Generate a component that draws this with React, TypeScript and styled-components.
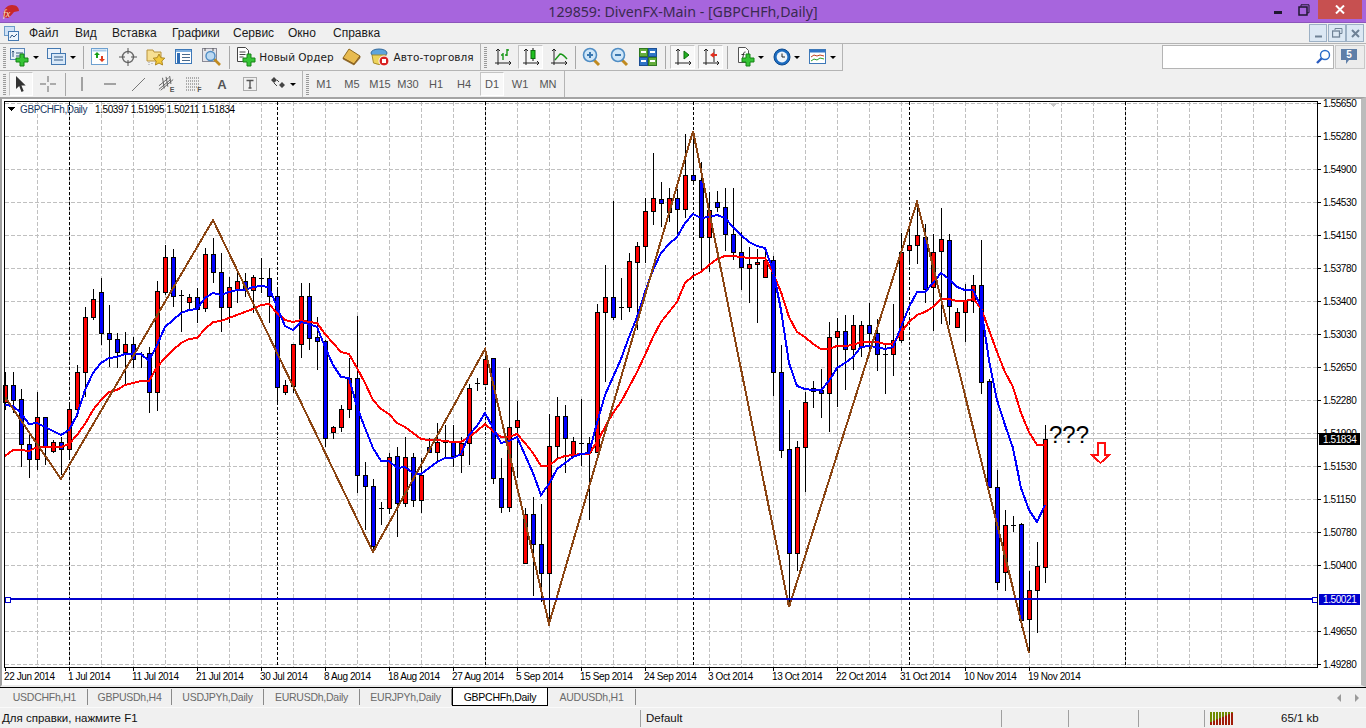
import React from "react";
import styled, { createGlobalStyle } from "styled-components";

const GlobalStyle = createGlobalStyle`
    html, body { margin: 0; padding: 0; background: #f0f0f0; overflow: hidden; }
    * { box-sizing: border-box; }
`;

const Page = styled.div`
    width: 1366px;
    height: 728px;
    display: flex;
    flex-direction: column;
    font-family: "Liberation Sans", Arial, sans-serif;
    background: #f0f0f0;
    color: #000;
    overflow: hidden;
`;

const TitleBar = styled.div`
    height: 23px;
    flex: none;
    position: relative;
    background: #a765dd;
    border-bottom: 1px solid #8c55bb;
`;
const AppLogo = styled.svg`
    position: absolute;
    left: 2px;
    top: 4px;
`;
const TitleText = styled.div`
    position: absolute;
    left: 548px;
    top: 2px;
    width: 270px;
    text-align: center;
    white-space: nowrap;
    font-family: "Noto Sans", sans-serif;
    font-size: 14.2px;
    line-height: 20px;
    color: #3a2a50;
`;
const WinMin = styled.div`
    position: absolute;
    left: 1274px;
    top: 11px;
    width: 8px;
    height: 3px;
    background: #1f1730;
`;
const WinMax = styled.svg`
    position: absolute;
    left: 1298px;
    top: 4px;
`;
const WinClose = styled.div`
    position: absolute;
    left: 1318px;
    top: 0;
    width: 44px;
    height: 19px;
    background: #c75050;
    display: flex;
    align-items: center;
    justify-content: center;
`;

const MenuBar = styled.div`
    height: 20px;
    flex: none;
    position: relative;
    display: flex;
    align-items: center;
    font-size: 12px;
    padding-left: 29px;
`;
const MdiIcon = styled.svg`
    position: absolute;
    left: 4px;
    top: 3px;
`;
const MenuItem = styled.span<{ $w: number }>`
    width: ${p => p.$w}px;
    flex: none;
    color: #1a1a1a;
`;
const MdiBtn = styled.div<{ $x: number }>`
    position: absolute;
    left: ${p => p.$x}px;
    top: 1px;
    width: 18px;
    height: 18px;
    background: #dce8f4;
    border: 1px solid #9cb0c4;
    display: flex;
    align-items: center;
    justify-content: center;
`;

const ToolRow = styled.div<{ $h: number; $line: boolean }>`
    height: ${p => p.$h}px;
    flex: none;
    display: flex;
    border-top: ${p => (p.$line ? "1px solid #b4b4b4" : "none")};
    position: relative;
`;
const ToolGroup = styled.div<{ $w: number; $edge?: boolean }>`
    width: ${p => p.$w}px;
    flex: none;
    display: flex;
    align-items: center;
    padding-left: 3px;
    border-right: 1px solid #b4b4b4;
    border-bottom: ${p => (p.$edge ? "1px solid #b4b4b4" : "none")};
`;
const Grip = styled.div`
    width: 3px;
    height: 21px;
    flex: none;
    background-image: linear-gradient(#9a9a9a 1px, transparent 1px);
    background-size: 3px 2px;
`;
const ToolSep = styled.div<{ $ml: number }>`
    width: 1px;
    height: 23px;
    flex: none;
    margin-left: ${p => p.$ml}px;
    background: #a8a8a8;
`;
const ToolBtn = styled.div<{ $w?: number; $ml?: number; $on?: boolean }>`
    width: ${p => p.$w ?? 24}px;
    height: 24px;
    flex: none;
    margin-left: ${p => p.$ml ?? 4}px;
    display: flex;
    align-items: center;
    justify-content: center;
    gap: 3px;
    background: ${p => (p.$on ? "#f8f8f8" : "transparent")};
    border: ${p => (p.$on ? "1px solid" : "none")};
    border-color: #c4c4c4 #fff #fff #c4c4c4;
`;
const BtnLabel = styled.span`
    font-family: "DejaVu Sans", sans-serif;
    font-size: 10.5px;
    white-space: nowrap;
    color: #1a1a1a;
`;
const PeriodBtn = styled(ToolBtn)`
    font-size: 11px;
    color: #555;
`;
const Caret = styled.div`
    width: 0;
    height: 0;
    flex: none;
    border-left: 3px solid transparent;
    border-right: 3px solid transparent;
    border-top: 3px solid #000;
`;
const SearchBox = styled.div`
    position: absolute;
    left: 1162px;
    top: 1px;
    width: 172px;
    height: 24px;
    background: #fff;
    border: 1px solid #b4b4b4;
`;
const SearchIcon = styled.svg`
    position: absolute;
    right: 2px;
    top: 3px;
`;
const ChatBtn = styled.div`
    position: absolute;
    left: 1335px;
    top: 1px;
    width: 30px;
    height: 24px;
    background: #ececec;
    border: 1px solid #c8c8c8;
    display: flex;
    align-items: center;
    justify-content: center;
`;

const ChartPane = styled.div`
    height: 590px;
    flex: none;
    background: #fff;
    border-top: 2px solid #a4a4a4;
    border-left: 2px solid #a0a0a0;
    border-right: 5px solid #bcbcbc;
    border-bottom: 2px solid #ebebeb;
`;
const ChartSvg = styled.svg`
    display: block;
`;
const AxisText = styled.text`
    font-family: "Liberation Sans", Arial, sans-serif;
    font-size: 10px;
    letter-spacing: -0.4px;
    fill: #000;
`;
const LegendText = styled(AxisText)`
    fill: #17385f;
`;
const LabelText = styled(AxisText)`
    fill: #fff;
`;
const NoteText = styled.text`
    font-family: "Liberation Sans", Arial, sans-serif;
    font-size: 24px;
    fill: #000;
`;

const TabBar = styled.div`
    height: 20px;
    flex: none;
    position: relative;
    display: flex;
    padding-left: 2px;
    border-top: 1px solid #000;
`;
const Tab = styled.div<{ $w: number; $active?: boolean }>`
    width: ${p => p.$w}px;
    height: ${p => (p.$active ? 18 : 16)}px;
    margin-top: ${p => (p.$active ? 0 : 1)}px;
    flex: none;
    display: flex;
    align-items: center;
    justify-content: center;
    font-size: 10.5px;
    letter-spacing: -0.25px;
    color: ${p => (p.$active ? "#000" : "#6a6a6a")};
    background: ${p => (p.$active ? "#fff" : "transparent")};
    border-right: 1px solid ${p => (p.$active ? "#000" : "#8a8a8a")};
    border-left: ${p => (p.$active ? "1px solid #000" : "none")};
    border-bottom: ${p => (p.$active ? "1px solid #000" : "none")};
`;
const TabArrow = styled.div<{ $x: number; $dir: "l" | "r" }>`
    position: absolute;
    left: ${p => p.$x}px;
    top: 6px;
    width: 0;
    height: 0;
    border-top: 4px solid transparent;
    border-bottom: 4px solid transparent;
    border-${p => (p.$dir === "l" ? "right" : "left")}: 4px solid #9a9a9a;
`;

const StatusBar = styled.div`
    height: 21px;
    flex: none;
    display: flex;
    align-items: center;
    border-top: 1px solid #fafafa;
    font-size: 11.5px;
`;
const StatusCell = styled.div<{ $w: number; $first?: boolean; $pad?: number }>`
    width: ${p => p.$w}px;
    height: 17px;
    flex: none;
    display: flex;
    align-items: center;
    padding-left: ${p => p.$pad ?? 5}px;
    border-left: ${p => (p.$first ? "none" : "1px solid #a0a0a0")};
    white-space: nowrap;
    color: #111;
`;

/* ---------- chart data, screen pixels ---------- */
type Candle = [number, number, number, number, number, "r" | "b"];
const candles: Candle[] = [
    [5, 385, 402, 372, 410, "r"], [13, 385, 400, 372, 413, "b"], [21, 399, 444, 389, 467, "b"], [29, 444, 459, 432, 478, "b"],
    [37, 417, 459, 392, 470, "r"], [45, 417, 447, 417, 465, "b"], [53, 442, 451, 440, 453, "r"], [61, 442, 449, 437, 475, "b"],
    [69, 409, 449, 402, 458, "r"], [77, 372, 409, 365, 417, "r"], [85, 317, 372, 307, 397, "r"], [93, 299, 317, 289, 320, "r"],
    [101, 292, 333, 278, 345, "b"], [109, 333, 339, 305, 367, "b"], [117, 339, 352, 333, 368, "b"], [125, 344, 352, 332, 385, "r"],
    [133, 344, 359, 337, 368, "b"], [141, 354, 354, 352, 368, "b"], [149, 353, 392, 347, 413, "b"], [157, 291, 392, 281, 411, "r"],
    [165, 257, 292, 245, 295, "r"], [173, 257, 296, 249, 307, "b"], [181, 295, 295, 290, 332, "b"], [189, 297, 302, 294, 309, "r"],
    [197, 297, 309, 288, 323, "b"], [205, 254, 308, 248, 312, "r"], [213, 254, 272, 238, 283, "b"], [221, 272, 307, 253, 332, "b"],
    [229, 287, 307, 277, 323, "r"], [237, 281, 290, 273, 303, "r"], [245, 281, 290, 273, 297, "b"], [253, 277, 290, 275, 313, "r"],
    [261, 278, 278, 258, 293, "b"], [269, 278, 296, 268, 323, "b"], [277, 296, 387, 287, 403, "b"], [285, 385, 392, 380, 395, "r"],
    [293, 344, 386, 344, 393, "r"], [301, 296, 344, 283, 358, "r"], [309, 296, 338, 283, 350, "b"], [317, 337, 341, 317, 370, "b"],
    [325, 341, 438, 340, 447, "b"], [333, 427, 432, 426, 439, "r"], [341, 409, 427, 405, 432, "r"], [349, 378, 409, 358, 418, "r"],
    [357, 378, 475, 316, 493, "b"], [365, 475, 486, 462, 530, "b"], [373, 486, 546, 479, 552, "b"], [381, 508, 508, 502, 525, "b"],
    [389, 457, 508, 453, 514, "r"], [397, 456, 503, 447, 537, "b"], [405, 457, 503, 437, 507, "r"], [413, 457, 500, 453, 507, "b"],
    [421, 475, 500, 458, 513, "r"], [429, 447, 452, 438, 453, "b"], [437, 442, 452, 423, 463, "r"], [445, 442, 442, 425, 458, "b"],
    [453, 442, 456, 425, 467, "b"], [461, 443, 455, 437, 473, "r"], [469, 388, 443, 384, 465, "r"], [477, 383, 383, 378, 391, "b"],
    [485, 359, 384, 350, 384, "r"], [493, 358, 478, 358, 484, "b"], [501, 478, 507, 458, 513, "b"], [509, 427, 507, 368, 512, "r"],
    [517, 420, 427, 401, 478, "r"], [525, 514, 563, 508, 563, "r"], [533, 514, 544, 497, 596, "b"], [541, 544, 573, 504, 602, "b"],
    [549, 446, 573, 414, 620, "r"], [557, 416, 446, 397, 460, "r"], [565, 416, 438, 405, 473, "b"], [573, 441, 456, 437, 456, "r"],
    [581, 443, 443, 399, 466, "b"], [589, 443, 452, 437, 520, "b"], [597, 312, 452, 304, 452, "r"], [605, 297, 312, 265, 382, "r"],
    [613, 297, 317, 201, 320, "b"], [621, 307, 307, 278, 320, "b"], [629, 261, 307, 253, 312, "r"], [637, 246, 262, 242, 330, "r"],
    [645, 211, 246, 198, 263, "r"], [653, 198, 211, 153, 225, "r"], [661, 199, 203, 182, 227, "b"], [669, 198, 212, 188, 222, "r"],
    [677, 198, 209, 189, 237, "b"], [685, 175, 209, 134, 218, "r"], [693, 175, 180, 133, 182, "b"], [701, 180, 237, 162, 270, "b"],
    [709, 210, 237, 192, 272, "r"], [717, 202, 207, 191, 212, "b"], [725, 207, 234, 188, 251, "b"], [733, 234, 252, 188, 260, "b"],
    [741, 252, 267, 232, 290, "b"], [749, 264, 268, 247, 303, "r"], [757, 262, 264, 249, 323, "r"], [765, 260, 277, 251, 278, "r"],
    [773, 260, 372, 256, 396, "b"], [781, 372, 450, 345, 458, "b"], [789, 449, 553, 410, 607, "b"], [797, 447, 553, 441, 571, "r"],
    [805, 402, 447, 392, 492, "r"], [813, 388, 391, 381, 408, "b"], [821, 390, 393, 369, 418, "b"], [829, 337, 393, 322, 432, "r"],
    [837, 331, 337, 318, 407, "r"], [845, 331, 349, 315, 390, "b"], [853, 325, 349, 315, 370, "r"], [861, 325, 346, 321, 357, "r"],
    [869, 325, 333, 303, 353, "b"], [877, 333, 354, 319, 371, "b"], [885, 354, 354, 345, 394, "b"], [893, 340, 354, 304, 376, "r"],
    [901, 252, 340, 233, 343, "r"], [909, 245, 250, 222, 264, "r"], [917, 235, 245, 202, 264, "r"], [925, 237, 289, 224, 303, "b"],
    [933, 252, 287, 234, 331, "r"], [941, 239, 251, 208, 324, "r"], [949, 240, 306, 234, 325, "b"], [957, 312, 327, 308, 327, "r"],
    [965, 301, 312, 284, 342, "r"], [973, 285, 301, 275, 313, "r"], [981, 285, 382, 240, 394, "b"], [989, 381, 487, 379, 487, "b"],
    [997, 487, 582, 470, 590, "b"], [1005, 525, 572, 510, 591, "r"], [1013, 525, 525, 516, 532, "b"], [1021, 524, 620, 523, 628, "b"],
    [1029, 590, 619, 571, 653, "r"], [1037, 566, 590, 542, 633, "r"], [1045, 439, 567, 425, 583, "r"],
];

const fastMa = "5,405 13,406 21,413 29,424 37,423 45,427 53,431 61,435 69,430 77,415 85,390 93,373 101,363 109,358 117,357 125,354 133,354 141,354 149,361 157,345 165,327 173,320 181,313 189,310 197,309 205,298 213,293 221,295 229,292 237,290 245,290 253,287 261,286 269,287 277,307 285,326 293,330 301,322 309,324 317,327 325,347 333,365 341,377 349,378 357,407 365,428 373,448 381,461 389,461 397,468 405,467 413,473 421,474 429,468 437,462 445,458 453,458 461,454 469,435 477,426 485,413 493,428 501,443 509,441 517,437 525,455 533,473 541,495 549,484 557,469 565,463 573,457 581,454 589,453 597,423 605,395 613,377 621,359 629,337 637,317 645,292 653,270 661,253 669,244 677,237 685,223 693,214 701,218 709,217 717,215 725,218 733,227 741,235 749,242 757,246 765,248 773,270 781,310 789,363 797,386 805,389 813,390 821,390 829,381 837,368 845,363 853,357 861,347 869,346 877,347 885,349 893,347 901,327 909,307 917,292 925,292 933,283 941,273 949,279 957,287 965,290 973,290 981,307 989,360 997,400 1005,425 1013,448 1021,488 1029,510 1037,522 1045,505";
const slowMa = "5,456 13,450 21,450 29,451 37,447 45,447 53,447 61,447 69,444 77,435 85,424 93,410 101,400 109,392 117,390 125,385 133,383 141,381 149,381 157,367 165,358 173,350 181,343 189,339 197,338 205,329 213,322 221,321 229,318 237,315 245,312 253,309 261,305 269,304 277,313 285,320 293,322 301,320 309,322 317,323 325,334 333,343 341,352 349,354 357,368 365,383 373,400 381,409 389,414 397,423 405,427 413,433 421,439 429,440 437,440 445,441 453,442 461,442 469,437 477,431 485,424 493,431 501,437 509,437 517,434 525,443 533,453 541,466 549,466 557,459 565,456 573,455 581,454 589,454 597,442 605,427 613,413 621,402 629,387 637,372 645,355 653,337 661,322 669,312 677,302 685,283 693,276 701,272 709,265 717,259 725,256 733,256 741,257 749,258 757,258 765,258 773,273 781,292 789,317 797,332 805,337 813,344 821,349 829,349 837,346 845,346 853,345 861,342 869,342 877,342 885,344 893,344 901,333 909,322 917,315 925,312 933,307 941,299 949,299 957,301 965,301 973,299 981,308 989,330 997,352 1005,372 1013,387 1021,413 1029,432 1037,445 1045,445";
const zigzag = "5,397 61,479 213,220 373,552 485,349 549,624 693,131 789,607 917,202 1029,653";

const priceLevels: [number, string][] = [
    [103, "1.55650"], [136, "1.55280"], [169, "1.54900"], [202, "1.54530"], [235, "1.54150"], [268, "1.53780"],
    [301, "1.53400"], [334, "1.53030"], [367, "1.52650"], [400, "1.52280"], [433, "1.51900"], [466, "1.51530"],
    [499, "1.51150"], [532, "1.50780"], [565, "1.50400"], [631, "1.49650"], [664, "1.49280"],
];
const dateLabels = [
    "22 Jun 2014", "1 Jul 2014", "11 Jul 2014", "21 Jul 2014", "30 Jul 2014", "8 Aug 2014", "18 Aug 2014", "27 Aug 2014", "5 Sep 2014",
    "15 Sep 2014", "24 Sep 2014", "3 Oct 2014", "13 Oct 2014", "22 Oct 2014", "31 Oct 2014", "10 Nov 2014", "19 Nov 2014",
];
const gridX = Array.from({ length: 41 }, (_, i) => 5 + 32 * i).filter(x => x > 5 && x < 1317);
const monthX = [69, 277, 485, 693, 909, 1125];

function Chart() {
    return (
        <ChartSvg width={1359} height={586} viewBox="2 99 1359 586" shapeRendering="crispEdges">
            {gridX.map(x => <line key={x} x1={x + 0.5} x2={x + 0.5} y1={102} y2={667} stroke="#c0c0c0" strokeDasharray="4 2" />)}
            {priceLevels.map(([y]) => <line key={y} x1={5} x2={1317} y1={y + 0.5} y2={y + 0.5} stroke="#c0c0c0" strokeDasharray="4 2" />)}
            <line x1={5} x2={1317} y1={598.5} y2={598.5} stroke="#c0c0c0" strokeDasharray="4 2" />
            {monthX.map(x => <line key={x} x1={x + 0.5} x2={x + 0.5} y1={102} y2={667} stroke="#000" strokeDasharray="3 2" />)}
            <line x1={5} x2={1317} y1={438.5} y2={438.5} stroke="#c0c0c0" />

            {candles.map(([x, top, bot, wt, wb, c]) => (
                <g key={x}>
                    <rect x={x} y={wt} width={1} height={wb - wt} fill="#000" />
                    {top === bot ? (
                        <rect x={x - 2} y={top} width={5} height={1} fill="#000" />
                    ) : (
                        <>
                            <rect x={x - 2} y={top} width={5} height={bot - top + 1} fill="#000" />
                            <rect x={x - 1} y={top + 1} width={3} height={Math.max(bot - top - 1, 1)} fill={c === "r" ? "#ff0000" : "#0000ff"} />
                        </>
                    )}
                </g>
            ))}

            <polyline points={slowMa} fill="none" stroke="#ff0000" strokeWidth={2} />
            <polyline points={fastMa} fill="none" stroke="#0000ff" strokeWidth={2} />
            <polyline points={zigzag} fill="none" stroke="#8b4513" strokeWidth={2} />

            <rect x={5} y={598} width={1312} height={2} fill="#0000cd" />
            <rect x={5} y={597} width={5} height={5} fill="#fff" stroke="#0000cd" />
            <rect x={1312} y={597} width={5} height={5} fill="#fff" stroke="#0000cd" />

            <NoteText x={1049} y={443}>???</NoteText>
            <path d="M1097.5 442.5h7v12h5l-9 8.5l-9-8.5h6z" fill="#fff" stroke="#ff1010" strokeWidth={2} />
            <path d="M1049 103h9l-4.5 4z" fill="#c8c8c8" />

            <rect x={4} y={101} width={1313} height={566} fill="none" stroke="#000" />
            {priceLevels.map(([y, label]) => (
                <g key={label}>
                    <rect x={1317} y={y} width={4} height={1} fill="#000" />
                    <AxisText x={1323} y={y + 4}>{label}</AxisText>
                </g>
            ))}
            {dateLabels.map((d, i) => (
                <g key={d}>
                    <rect x={5 + 64 * i} y={667} width={1} height={4} fill="#000" />
                    <AxisText x={4 + 64 * i} y={680}>{d}</AxisText>
                </g>
            ))}

            <rect x={1319} y={433} width={41} height={12} fill="#000" />
            <LabelText x={1323} y={443}>1.51834</LabelText>
            <rect x={1319} y={594} width={41} height={11} fill="#0000cd" />
            <LabelText x={1323} y={603}>1.50021</LabelText>

            <path d="M8 107h7l-3.5 4z" fill="#000" />
            <LegendText x={20} y={113}>GBPCHFh,Daily</LegendText>
            <AxisText x={95} y={113}>1.50397 1.51995 1.50211 1.51834</AxisText>
        </ChartSvg>
    );
}

/* ---------- toolbar drawings ---------- */
const Plus = ({ x, y }: { x: number; y: number }) => (
    <path d={`M${x - 2} ${y - 6}h4v4h4v4h-4v4h-4v-4h-4v-4h4z`} fill="#35c435" stroke="#178317" />
);
const Axes = () => (
    <path d="M5 2v16M2 16h16M3 4l2-2l2 2M16 14l2 2l-2 2" fill="none" stroke="#222" />
);
const Glass = ({ minus }: { minus?: boolean }) => (
    <svg width="20" height="20" viewBox="0 0 20 20">
        <path d="M11 12l6 6" stroke="#c08a20" strokeWidth="3" />
        <circle cx="8" cy="8" r="6.5" fill="#cfe6f8" stroke="#4f8dc4" strokeWidth="1.6" />
        <path d={minus ? "M5 8h6" : "M5 8h6M8 5v6"} stroke="#3b78b0" strokeWidth="2" />
    </svg>
);

const NewChartIcon = () => (
    <svg width="20" height="20" viewBox="0 0 20 20">
        <rect x="0.5" y="1.5" width="14" height="11" fill="#e9f1fa" stroke="#5b86b8" />
        <path d="M3 4v6M1.8 5.2L3 4l1.2 1.2M6 6h7M6 9h7" fill="none" stroke="#33557a" />
        <Plus x={12} y={13} />
    </svg>
);
const ProfilesIcon = () => (
    <svg width="20" height="20" viewBox="0 0 20 20">
        <rect x="0.5" y="1.5" width="13" height="10" fill="#e9f1fa" stroke="#4478b0" />
        <rect x="4.5" y="6.5" width="14" height="11" fill="#d8e8f8" stroke="#4478b0" />
        <path d="M7 10h9M7 13h9" stroke="#335a86" />
    </svg>
);
const MarketIcon = () => (
    <svg width="18" height="18" viewBox="0 0 18 18">
        <rect x="0.5" y="0.5" width="16" height="16" fill="#fff" stroke="#6da0d0" />
        <rect x="1.5" y="1.5" width="14" height="2" fill="#a8cbea" />
        <path d="M6 4l3 3H7v3H5V7H3z" fill="#18a018" />
        <path d="M11 14l-3-3h2V8h2v3h2z" fill="#e03b1c" />
    </svg>
);
const DataIcon = () => (
    <svg width="18" height="18" viewBox="0 0 18 18">
        <circle cx="9" cy="9" r="5.5" fill="none" stroke="#6a6a6a" strokeWidth="1.4" />
        <path d="M9 0v6M9 12v6M0 9h6M12 9h6" stroke="#555" />
    </svg>
);
const NavigatorIcon = () => (
    <svg width="20" height="20" viewBox="0 0 20 20">
        <path d="M1 3h6l1 2h7v9H1z" fill="#f7df93" stroke="#b8923c" />
        <path d="M13 7l1.8 3.7l4 .5l-3 2.8l.8 4l-3.6-2l-3.6 2l.8-4l-3-2.8l4-.5z" fill="#f3c93a" stroke="#b08820" />
        <path d="M3 15v3M6 16v2" stroke="#999" strokeDasharray="1 1" />
    </svg>
);
const TerminalIcon = () => (
    <svg width="18" height="18" viewBox="0 0 18 18">
        <rect x="0.5" y="1.5" width="16" height="14" fill="#fff" stroke="#3d78b8" />
        <rect x="1" y="2" width="15" height="2" fill="#7fb0e0" />
        <rect x="2" y="5" width="3" height="10" fill="#2f6db5" />
        <path d="M7 6.5h8M7 9.5h8M7 12.5h8" stroke="#4a6a8c" />
    </svg>
);
const TesterIcon = () => (
    <svg width="20" height="20" viewBox="0 0 20 20">
        <rect x="0.5" y="1.5" width="14" height="13" fill="#e4e4ea" stroke="#8a8a96" />
        <path d="M3 1v3M11 1v3" stroke="#555" />
        <path d="M12 12l6 6" stroke="#c08a20" strokeWidth="2.6" />
        <circle cx="8.5" cy="9" r="4.5" fill="#bcd9f2" stroke="#4f8dc4" strokeWidth="1.4" />
    </svg>
);
const OrderIcon = () => (
    <svg width="20" height="20" viewBox="0 0 20 20">
        <path d="M1.5 0.5h8l3 3v11h-11z" fill="#fff" stroke="#444" />
        <path d="M3.5 5h6M3.5 7.5h6M3.5 10h4" stroke="#444" />
        <Plus x={13} y={13} />
    </svg>
);
const EditorIcon = () => (
    <svg width="20" height="18" viewBox="0 0 20 18">
        <path d="M7 1l11 7l-6 8L1 10z" fill="#e8bb50" stroke="#8e6a20" />
        <path d="M1 10l11 6l6-8v2l-6 7L1 11z" fill="#a87830" stroke="#7a5418" strokeWidth="0.6" />
    </svg>
);
const AutoIcon = () => (
    <svg width="20" height="20" viewBox="0 0 20 20">
        <ellipse cx="9" cy="6" rx="8" ry="4" fill="#5ea4dc" stroke="#33689a" />
        <path d="M2 8h14l-1.5 8q-5.5 3-11 0z" fill="#edd45c" stroke="#a88c2c" />
        <circle cx="14" cy="14" r="5" fill="#d82020" stroke="#fff" />
        <rect x="12" y="12" width="4" height="4" fill="#fff" />
    </svg>
);
const BarsIcon = () => (
    <svg width="20" height="20" viewBox="0 0 20 20">
        <Axes />
        <path d="M10 13V6M10 8h-2M14 9V2M14 3h2M14 8h-2" fill="none" stroke="#169616" strokeWidth="1.4" />
    </svg>
);
const CandleIcon = () => (
    <svg width="20" height="20" viewBox="0 0 20 20">
        <Axes />
        <path d="M12 1v13" stroke="#111" />
        <rect x="10" y="3.5" width="4" height="8" fill="#1fc01f" stroke="#0c6c0c" />
    </svg>
);
const LineIcon = () => (
    <svg width="20" height="20" viewBox="0 0 20 20">
        <Axes />
        <path d="M6 13l5-6q3 0 7 5" fill="none" stroke="#169616" strokeWidth="1.4" />
    </svg>
);
const TileIcon = () => (
    <svg width="18" height="18" viewBox="0 0 18 18">
        <rect x="0.5" y="0.5" width="8" height="8" fill="#64ad3c" stroke="#2f7a20" />
        <rect x="9.5" y="0.5" width="8" height="8" fill="#2f75c8" stroke="#1c4f94" />
        <rect x="0.5" y="9.5" width="8" height="8" fill="#2f75c8" stroke="#1c4f94" />
        <rect x="9.5" y="9.5" width="8" height="8" fill="#64ad3c" stroke="#2f7a20" />
        <path d="M2 4h5M11 4h5M2 13h5M11 13h5" stroke="#fff" strokeWidth="2" />
    </svg>
);
const ScrollIcon = () => (
    <svg width="20" height="20" viewBox="0 0 20 20">
        <Axes />
        <path d="M11 4v8l5-4z" fill="#1fb01f" stroke="#0c6c0c" />
    </svg>
);
const ShiftIcon = () => (
    <svg width="20" height="20" viewBox="0 0 20 20">
        <Axes />
        <path d="M13 2v13" stroke="#222" />
        <path d="M9 8l4-3v2h3v2h-3v2z" fill="#e03020" />
    </svg>
);
const IndicatorIcon = () => (
    <svg width="18" height="20" viewBox="0 0 18 20">
        <path d="M1.5 0.5h7l3 3v12h-10z" fill="#fff" stroke="#555" />
        <path d="M5 11c1 0 1-1 1.5-4c.4-2 1-2 2-2M4.5 7.5h3" fill="none" stroke="#333" />
        <Plus x={11} y={13} />
    </svg>
);
const ClockIcon = () => (
    <svg width="18" height="18" viewBox="0 0 18 18">
        <circle cx="9" cy="9" r="8" fill="#1c6cc0" stroke="#0e4a8e" />
        <circle cx="9" cy="9" r="5.4" fill="#eef4fa" />
        <path d="M9 5.5V9h3" fill="none" stroke="#222" />
    </svg>
);
const TemplateIcon = () => (
    <svg width="18" height="18" viewBox="0 0 18 18">
        <rect x="0.5" y="1.5" width="16" height="14" fill="#fff" stroke="#3d78b8" />
        <rect x="1" y="2" width="15" height="2.5" fill="#2f75c8" />
        <path d="M2 9l3-2l3 1l3-1l4 1" fill="none" stroke="#c04020" />
        <path d="M2 13l3-2l3 1l3-2l4 1" fill="none" stroke="#28a028" />
    </svg>
);
const CursorIcon = () => (
    <svg width="16" height="18" viewBox="0 0 16 18">
        <path d="M3 1v13l3.2-3l2.3 6l2.2-1l-2.3-5.5h4.3z" fill="#333" />
    </svg>
);
const CrossIcon = () => (
    <svg width="16" height="16" viewBox="0 0 16 16">
        <path d="M8 0v6M8 10v6M0 8h6M10 8h6" stroke="#666" />
    </svg>
);
const VLineIcon = () => <svg width="4" height="14" viewBox="0 0 4 14"><path d="M2 0v14" stroke="#555" /></svg>;
const HLineIcon = () => <svg width="14" height="4" viewBox="0 0 14 4"><path d="M1 2h12" stroke="#555" /></svg>;
const TrendIcon = () => (
    <svg width="16" height="16" viewBox="0 0 16 16">
        <path d="M2 15L15 2" stroke="#777" />
    </svg>
);
const ChannelIcon = () => (
    <svg width="17" height="16" viewBox="0 0 19 18">
        <path d="M1 11L12 2M1 15L14 4M3 16L17 4M5 2l2 12M9 1l2 11M13 0l1.5 9" stroke="#555" fill="none" />
    </svg>
);
const FiboIcon = () => (
    <svg width="16" height="14" viewBox="0 0 16 14">
        <path d="M0 1h14M0 4h14M0 7h14M0 10h14M0 13h10" stroke="#666" strokeDasharray="1 1" />
    </svg>
);
const TextBoxIcon = () => (
    <svg width="14" height="14" viewBox="0 0 14 14">
        <rect x="0.5" y="0.5" width="13" height="13" fill="none" stroke="#666" strokeDasharray="1 1" />
        <path d="M3.5 3.5h7M7 3.5v7.5M5.5 11h3" fill="none" stroke="#555" strokeWidth="1.4" />
    </svg>
);
const ArrowsIcon = () => (
    <svg width="16" height="14" viewBox="0 0 16 14">
        <path d="M0 3l3-3l3 3l-3 3zM8 8l3-3l3 3l-3 3z" fill="#444" />
        <path d="M3 6l3 3M6 3l2 2" stroke="#444" />
    </svg>
);
const Mark = styled.span<{ $size: number; $alone?: boolean }>`
    font-size: ${p => p.$size}px;
    font-weight: 700;
    color: #555;
    line-height: 1;
    margin-left: ${p => (p.$alone ? 0 : -8)}px;
    margin-bottom: ${p => (p.$alone ? 0 : 3)}px;
    align-self: ${p => (p.$alone ? "center" : "flex-end")};
`;

const menuItems: [string, number][] = [["Файл", 46], ["Вид", 37], ["Вставка", 60], ["Графики", 61], ["Сервис", 55], ["Окно", 45], ["Справка", 60]];
const tabs: [string, number, boolean?][] = [
    ["USDCHFh,H1", 86], ["GBPUSDh,H4", 84], ["USDJPYh,Daily", 92], ["EURUSDh,Daily", 96],
    ["EURJPYh,Daily", 92], ["GBPCHFh,Daily", 96, true], ["AUDUSDh,H1", 88],
];
const periods = ["M5", "M15", "M30", "H1", "H4"];

export default function App() {
    return (
        <Page>
            <GlobalStyle />
            <TitleBar>
                <AppLogo width="18" height="15" viewBox="0 0 18 15">
                    <path d="M1 13c0-8 4-12 9-12s7 3 7 6l-5 1c-2 2-4 5-6 6z" fill="#c8282a" />
                    <text x="1" y="13" fontFamily="Liberation Serif, serif" fontStyle="italic" fontSize="10" fill="#f6e6c8">fx</text>
                </AppLogo>
                <TitleText>129859: DivenFX-Main - [GBPCHFh,Daily]</TitleText>
                <WinMin />
                <WinMax width="12" height="12" viewBox="0 0 12 12">
                    <path d="M3 2.5V0.8h8v8H9" fill="none" stroke="#1f1730" />
                    <rect x="1" y="3" width="8" height="8" fill="none" stroke="#1f1730" strokeWidth="1.5" />
                </WinMax>
                <WinClose>
                    <svg width="10" height="9" viewBox="0 0 10 9"><path d="M1 0.5l8 8M9 0.5l-8 8" stroke="#fff" strokeWidth="2" /></svg>
                </WinClose>
            </TitleBar>

            <MenuBar>
                <MdiIcon width="15" height="15" viewBox="0 0 15 15">
                    <rect x="0.5" y="0.5" width="10" height="9" fill="#cfe1f5" stroke="#6d9bc8" />
                    <rect x="4.5" y="5.5" width="10" height="9" fill="#eef5fc" stroke="#4478b0" />
                    <path d="M6 12l2-3l2 2l3-3" fill="none" stroke="#335a86" />
                </MdiIcon>
                {menuItems.map(([label, w]) => <MenuItem key={label} $w={w}>{label}</MenuItem>)}
                <MdiBtn $x={1309}><svg width="9" height="9" viewBox="0 0 9 9"><path d="M1 7.5h7" stroke="#6f8296" strokeWidth="2" /></svg></MdiBtn>
                <MdiBtn $x={1328}><svg width="11" height="10" viewBox="0 0 11 10"><path d="M3 2V0.5h7v5H8" fill="none" stroke="#6f8296" /><rect x="0.5" y="3" width="7" height="6" fill="none" stroke="#6f8296" strokeWidth="1.3" /></svg></MdiBtn>
                <MdiBtn $x={1346}><svg width="9" height="9" viewBox="0 0 9 9"><path d="M1 1l7 7M8 1l-7 7" stroke="#6f8296" strokeWidth="2" /></svg></MdiBtn>
            </MenuBar>

            <ToolRow $h={28} $line>
                <ToolGroup $w={481} $edge>
                    <Grip />
                    <ToolBtn $w={32} $ml={2}><NewChartIcon /><Caret /></ToolBtn>
                    <ToolBtn $w={34}><ProfilesIcon /><Caret /></ToolBtn>
                    <ToolSep $ml={5} />
                    <ToolBtn><MarketIcon /></ToolBtn>
                    <ToolBtn><DataIcon /></ToolBtn>
                    <ToolBtn><NavigatorIcon /></ToolBtn>
                    <ToolBtn><TerminalIcon /></ToolBtn>
                    <ToolBtn><TesterIcon /></ToolBtn>
                    <ToolSep $ml={5} />
                    <ToolBtn $w={100} $ml={5}><OrderIcon /><BtnLabel>Новый Ордер</BtnLabel></ToolBtn>
                    <ToolBtn $ml={5}><EditorIcon /></ToolBtn>
                    <ToolBtn $w={108}><AutoIcon /><BtnLabel>Авто-торговля</BtnLabel></ToolBtn>
                </ToolGroup>
                <ToolGroup $w={362} $edge>
                    <Grip />
                    <ToolBtn><BarsIcon /></ToolBtn>
                    <ToolBtn $w={25} $ml={3} $on><CandleIcon /></ToolBtn>
                    <ToolBtn><LineIcon /></ToolBtn>
                    <ToolSep $ml={4} />
                    <ToolBtn><Glass /></ToolBtn>
                    <ToolBtn><Glass minus /></ToolBtn>
                    <ToolBtn><TileIcon /></ToolBtn>
                    <ToolSep $ml={5} />
                    <ToolBtn $w={25} $on><ScrollIcon /></ToolBtn>
                    <ToolBtn $w={25} $ml={3} $on><ShiftIcon /></ToolBtn>
                    <ToolSep $ml={4} />
                    <ToolBtn $w={36}><IndicatorIcon /><Caret /></ToolBtn>
                    <ToolBtn $w={34} $ml={1}><ClockIcon /><Caret /></ToolBtn>
                    <ToolBtn $w={34} $ml={2}><TemplateIcon /><Caret /></ToolBtn>
                </ToolGroup>
                <SearchBox>
                    <SearchIcon width="16" height="16" viewBox="0 0 16 16">
                        <path d="M7 9l-5 5" stroke="#2a5cc0" strokeWidth="2.4" />
                        <circle cx="10" cy="6" r="4.5" fill="#fff" stroke="#2a6cc8" strokeWidth="1.4" />
                    </SearchIcon>
                </SearchBox>
                <ChatBtn>
                    <svg width="18" height="17" viewBox="0 0 18 17">
                        <path d="M0 0h16v11H8l-3 4v-4H0z" fill="#5f7fa8" />
                        <text x="8" y="9" textAnchor="middle" fontFamily="Liberation Sans, sans-serif" fontWeight="700" fontSize="10" fill="#fff">5</text>
                    </svg>
                </ChatBtn>
            </ToolRow>

            <ToolRow $h={26} $line={false}>
                <ToolGroup $w={303}>
                    <Grip />
                    <ToolBtn $ml={3} $on><CursorIcon /></ToolBtn>
                    <ToolBtn $ml={3}><CrossIcon /></ToolBtn>
                    <ToolSep $ml={5} />
                    <ToolBtn><VLineIcon /></ToolBtn>
                    <ToolBtn><HLineIcon /></ToolBtn>
                    <ToolBtn><TrendIcon /></ToolBtn>
                    <ToolBtn><ChannelIcon /><Mark $size={7}>E</Mark></ToolBtn>
                    <ToolBtn><FiboIcon /><Mark $size={7}>F</Mark></ToolBtn>
                    <ToolBtn><Mark $size={13} $alone>A</Mark></ToolBtn>
                    <ToolBtn><TextBoxIcon /></ToolBtn>
                    <ToolBtn $w={30} $ml={6}><ArrowsIcon /><Caret /></ToolBtn>
                </ToolGroup>
                <ToolGroup $w={262}>
                    <Grip />
                    <PeriodBtn $ml={3}>M1</PeriodBtn>
                    {periods.map(p => <PeriodBtn key={p}>{p}</PeriodBtn>)}
                    <PeriodBtn $on>D1</PeriodBtn>
                    <PeriodBtn>W1</PeriodBtn>
                    <PeriodBtn>MN</PeriodBtn>
                </ToolGroup>
            </ToolRow>

            <ChartPane><Chart /></ChartPane>

            <TabBar>
                {tabs.map(([label, w, active]) => <Tab key={label} $w={w} $active={active}>{label}</Tab>)}
                <TabArrow $x={1337} $dir="l" />
                <TabArrow $x={1355} $dir="r" />
            </TabBar>

            <StatusBar>
                <StatusCell $w={640} $first $pad={2}>Для справки, нажмите F1</StatusCell>
                <StatusCell $w={361}>Default</StatusCell>
                <StatusCell $w={67} />
                <StatusCell $w={70} />
                <StatusCell $w={66} />
                <StatusCell $w={70}>
                    <svg width="24" height="13" viewBox="0 0 24 13">
                        {Array.from({ length: 8 }, (_, i) => (
                            <g key={i}>
                                <rect x={i * 3} y={0} width={2} height={13} fill="#6f8a00" />
                                <rect x={i * 3} y={10 - i * 1.3} width={2} height={3 + i * 1.3} fill="#a01c08" />
                            </g>
                        ))}
                    </svg>
                </StatusCell>
                <StatusCell $w={90} $first $pad={7}>65/1 kb</StatusCell>
            </StatusBar>
        </Page>
    );
}
